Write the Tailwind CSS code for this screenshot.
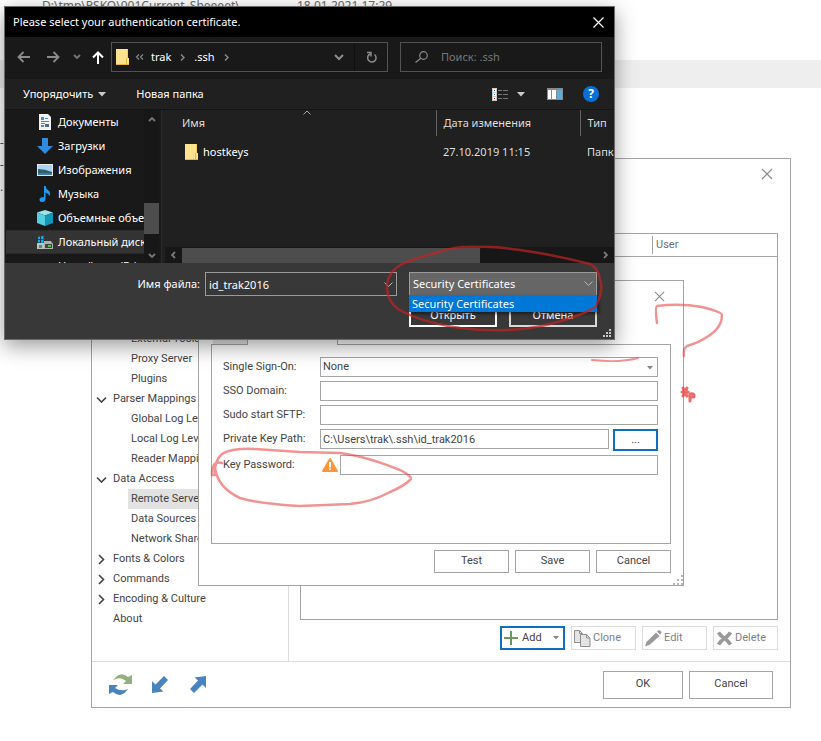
<!DOCTYPE html>
<html lang="en">
<head>
  <meta charset="UTF-8" />
  <meta name="viewport" content="width=device-width, initial-scale=1.0"/>
  <title>Remote Servers</title>
  <script src="https://cdn.jsdelivr.net/npm/@tailwindcss/browser@4"></script>
</head>
<body class="bg-white font-[Roboto,'Open_Sans',sans-serif] text-[11px] text-[#444]">

<main class="relative min-h-screen overflow-hidden">

  <!-- file list behind the windows -->
  <div class="flex h-[60px] pl-[42px] font-['Noto_Sans',sans-serif] text-xs leading-3 text-[#6b6b6b]">
    <span class="w-[255px]">D:\tmp\PSKO\001Current_Sheeeet\</span>
    <span>18.01.2021 17:29</span>
  </div>
  <div class="h-7 bg-[#eeeeee]"></div>
  <div class="pt-11 text-[13px] leading-[22px] text-[#555]">
    <p>-(</p>
    <p>-(</p>
    <p class="text-[#a03060]">.l</p>
  </div>

  <!-- settings window -->
  <section class="absolute left-[91px] top-[158px] w-[700px] h-[550px] flex flex-col bg-white border border-[#a5a5a5]">
    <div class="flex justify-end pt-[9px] pr-[17px]">
      <button aria-label="Close" class="size-3">
        <svg viewBox="0 0 12 12" class="size-3" fill="none" stroke="#8a8a8a" stroke-width="1.200"><path d="M1 1l10 10M11 1L1 11"/></svg>
      </button>
    </div>

    <div class="flex flex-1 min-h-0">
      <nav class="w-[197px] flex flex-col justify-end pb-8 border-r border-[#dcdcdc] leading-5 overflow-hidden whitespace-nowrap">
        <a href="#" class="pl-[39px]">External Tools</a>
        <a href="#" class="pl-[39px]">Proxy Server</a>
        <a href="#" class="pl-[39px]">Plugins</a>
        <a href="#" class="flex items-center gap-[6px] pl-1"><svg viewBox="0 0 11 11" class="w-[11px] h-[11px]" fill="none" stroke="#444" stroke-width="1.600"><path d="M1 3.500l4.500 4.500 4.500-4.500"/></svg>Parser Mappings</a>
        <a href="#" class="pl-[39px]">Global Log Levels</a>
        <a href="#" class="pl-[39px]">Local Log Levels</a>
        <a href="#" class="pl-[39px]">Reader Mappings</a>
        <a href="#" class="flex items-center gap-[6px] pl-1"><svg viewBox="0 0 11 11" class="w-[11px] h-[11px]" fill="none" stroke="#444" stroke-width="1.600"><path d="M1 3.500l4.500 4.500 4.500-4.500"/></svg>Data Access</a>
        <a href="#" class="ml-9 pl-[3px] bg-[#e2e2e2]">Remote Servers</a>
        <a href="#" class="pl-[39px]">Data Sources</a>
        <a href="#" class="pl-[39px]">Network Shares</a>
        <a href="#" class="flex items-center gap-[6px] pl-1"><svg viewBox="0 0 11 11" class="w-[11px] h-[11px]" fill="none" stroke="#444" stroke-width="1.600"><path d="M3 1l4.500 4.500L3 10"/></svg>Fonts &amp; Colors</a>
        <a href="#" class="flex items-center gap-[6px] pl-1"><svg viewBox="0 0 11 11" class="w-[11px] h-[11px]" fill="none" stroke="#444" stroke-width="1.600"><path d="M3 1l4.500 4.500L3 10"/></svg>Commands</a>
        <a href="#" class="flex items-center gap-[6px] pl-1"><svg viewBox="0 0 11 11" class="w-[11px] h-[11px]" fill="none" stroke="#444" stroke-width="1.600"><path d="M3 1l4.500 4.500L3 10"/></svg>Encoding &amp; Culture</a>
        <a href="#" class="pl-[21px]">About</a>
      </nav>

      <div class="flex-1 flex flex-col pt-[53px] pl-[11px] pr-3 pb-[11px]">
        <div class="flex-1 border border-[#a5a5a5]">
          <table class="w-full">
            <thead>
              <tr class="h-[22px] border-b border-[#a5a5a5]">
                <th class="w-[351px]"></th>
                <th class="py-[2px] text-left font-normal text-[#6f6f7a]"><span class="block pl-[3px] border-l border-[#a5a5a5] leading-[18px]">User</span></th>
              </tr>
            </thead>
          </table>
        </div>
        <div class="flex justify-end gap-[6px] pt-[6px]">
          <button class="flex items-center w-[65px] h-6 pl-[2px] border-2 border-[#106ebe]">
            <svg viewBox="0 0 14 14" class="size-[14px]" fill="none" stroke="#70965a" stroke-width="2"><path d="M7 0v14M0 7h14"/></svg>
            <span class="pl-1">Add</span>
            <svg viewBox="0 0 6 4" class="ml-auto mr-[4px] w-[6px] h-1" fill="#888"><path d="M0 0h6L3 3.500z"/></svg>
          </button>
          <button class="flex items-center w-[65px] h-6 pl-[2px] border border-[#dcdcdc] text-[#7f7f88]">
            <svg viewBox="0 0 17 17" class="w-[17px] h-[17px]" fill="#e4e4e4" stroke="#909090"><path d="M.5.5h5l3 3v9h-8z"/><path d="M5.500.5v3h3" fill="none"/><path d="M6.500 4.500h6l3.500 3.500v8.500H6.500z"/><path d="M12.500 4.500V8H16" fill="none"/></svg>
            <span class="pl-[2px]">Clone</span>
          </button>
          <button class="flex items-center w-[65px] h-6 pl-[2px] border border-[#dcdcdc] text-[#7f7f88]">
            <svg viewBox="0 0 17 17" class="w-[17px] h-[17px]" fill="#999"><path d="M0 16.500l1.500-4.500L11 2.500 14.500 6 5 14.500zM12 1.500l1-1q1.200-.8 2.300.3l.8.800q.8 1-.1 2L15 4.800z"/></svg>
            <span class="pl-[2px]">Edit</span>
          </button>
          <button class="flex items-center w-[65px] h-6 pl-[3px] border border-[#dcdcdc] text-[#7f7f88]">
            <svg viewBox="0 0 15 15" class="size-[15px]" fill="none" stroke="#999" stroke-width="3.600"><path d="M1.500 1.500q2 3.500 6 6t6 6M13.500 1.500q-2 3.500-6 6t-6 6"/></svg>
            <span class="pl-[3px]">Delete</span>
          </button>
        </div>
      </div>
    </div>

    <footer class="flex items-center h-[46px] pl-[17px] pr-[17px] border-t border-[#dcdcdc]">
      <button aria-label="Refresh" class="w-[23px]">
        <svg viewBox="0 0 23 21" class="w-[23px] h-[21px]"><path d="M4 6.500Q11-4 19 3L23 1v9h-9l3-3Q11 2 4 6.500z" fill="#94b080"/><path d="M19 15q-7 10-15 3L0 20v-9h9l-3 3q6 4 13 1z" fill="#4a84bf"/></svg>
      </button>
      <button aria-label="Import" class="ml-5 w-4">
        <svg viewBox="0 0 16 17" class="w-4 h-[17px]" fill="#4a84bf"><path d="M0 17V5l3.500 3.500L12 0l4 4-8 8.500 3.500 3z"/></svg>
      </button>
      <button aria-label="Export" class="ml-[22px] w-4">
        <svg viewBox="0 0 16 17" class="w-4 h-[17px]" fill="#4a84bf"><path d="M16 0v12l-3.500-3.500L4 17l-4-4 8-8.500L4.500 1.500z"/></svg>
      </button>
      <button class="ml-auto w-20 h-7 border border-[#a5a5a5]">OK</button>
      <button class="ml-[6px] w-[84px] h-7 border border-[#a5a5a5]">Cancel</button>
    </footer>
  </section>

  <!-- server properties window -->
  <section class="absolute left-[198px] top-[280px] w-[486px] h-[306px] flex flex-col bg-white border border-[#a5a5a5]">
    <div class="flex justify-end pt-[10px] pr-[18px]">
      <button aria-label="Close" class="size-[11px]">
        <svg viewBox="0 0 12 12" class="size-[11px]" fill="none" stroke="#8a8a8a" stroke-width="1.200"><path d="M1 1l10 10M11 1L1 11"/></svg>
      </button>
    </div>
    <div class="flex-1 flex flex-col px-3 pt-[18px]">
      <div class="flex h-[25px]">
        <div class="w-[37px] pl-[2px] border-b border-[#a5a5a5]"><div class="h-full bg-[#e6e6e6] border-r border-[#a5a5a5]"></div></div>
        <div class="w-[90px] border-r border-[#a5a5a5]"></div>
        <div class="flex-1 border-b border-[#a5a5a5]"></div>
      </div>
      <form class="flex flex-col gap-1 h-[199px] pl-[11px] pr-3 pt-3 border-x border-b border-[#a5a5a5]">
        <div class="flex items-center">
          <label for="sso" class="w-[97px]">Single Sign-On:</label>
          <div class="relative flex-1">
            <select id="sso" class="block appearance-none w-full h-5 px-[2px] border border-[#a5a5a5]"><option>None</option></select>
            <svg viewBox="0 0 6 4" class="absolute right-[5px] top-[9px] w-[6px] h-1" fill="#888"><path d="M0 0h6L3 3.500z"/></svg>
          </div>
        </div>
        <div class="flex items-center">
          <label for="domain" class="w-[97px]">SSO Domain:</label>
          <input id="domain" type="text" class="flex-1 h-5 px-[2px] border border-[#a5a5a5]">
        </div>
        <div class="flex items-center">
          <label for="sudo" class="w-[97px]">Sudo start SFTP:</label>
          <input id="sudo" type="text" class="flex-1 h-5 px-[2px] border border-[#a5a5a5]">
        </div>
        <div class="flex">
          <label for="keypath" class="w-[97px] leading-5">Private Key Path:</label>
          <input id="keypath" type="text" value="C:\Users\trak\.ssh\id_trak2016" class="flex-1 h-5 px-[2px] border border-[#a5a5a5]">
          <button type="button" class="ml-1 w-[45px] h-[22px] border-2 border-[#106ebe]">...</button>
        </div>
        <div class="flex items-center">
          <label for="keypass" class="w-[97px]">Key Password:</label>
          <svg viewBox="0 0 16 14" class="mx-[2px] w-4 h-[14px]"><path d="M8 0q.6 0 1 .8L15.800 12.600q.5 1.400-.8 1.400H1q-1.300 0-.8-1.400L7 .8Q7.400 0 8 0z" fill="#f9963b"/><path d="M7 4h2v5.500H7zM7 10.500h2v1.500H7z" fill="#fff"/></svg>
          <input id="keypass" type="password" class="flex-1 h-5 px-[2px] border border-[#a5a5a5]">
        </div>
      </form>
      <div class="flex justify-end gap-[6px] pt-[6px]">
        <button class="w-[75px] h-[23px] border border-[#a5a5a5]">Test</button>
        <button class="w-[75px] h-[23px] border border-[#a5a5a5]">Save</button>
        <button class="w-[75px] h-[23px] border border-[#a5a5a5]">Cancel</button>
      </div>
    </div>
    <svg viewBox="0 0 10 10" class="absolute right-0 bottom-0 size-[10px]" fill="#b5b5b5"><path d="M8 0h2v2H8zM8 4h2v2H8zM4 4h2v2H4zM8 8h2v2H8zM4 8h2v2H4zM0 8h2v2H0z"/></svg>
  </section>

  <!-- file picker -->
  <section class="absolute left-1 top-[6px] w-[611px] h-[334px] flex flex-col bg-[#202020] border border-[#6a6a6a] shadow-[0_6px_20px_rgba(0,0,0,0.4)] font-['Noto_Sans','Open_Sans',sans-serif] text-[11px] text-white">
    <div class="flex items-center justify-between h-[30px] pl-2 pr-[10px] bg-black">
      <h1>Please select your authentication certificate.</h1>
      <button aria-label="Close" class="size-[11px]">
        <svg viewBox="0 0 11 11" class="size-[11px]" fill="none" stroke="#fff" stroke-width="1.200"><path d="M.5.5l10 10M10.500.5l-10 10"/></svg>
      </button>
    </div>

    <div class="flex items-center h-[42px] pl-3 pr-3 pb-[2px] bg-[#191919]">
      <button aria-label="Back"><svg viewBox="0 0 13 12" class="w-[13px] h-3" fill="none" stroke="#8c8c8c" stroke-width="1.800"><path d="M13 6H1.500M6.500 1l-5 5 5 5"/></svg></button>
      <button aria-label="Forward" class="ml-[17px]"><svg viewBox="0 0 13 12" class="w-[13px] h-3" fill="none" stroke="#8c8c8c" stroke-width="1.800"><path d="M0 6h11.500M6.500 1l5 5-5 5"/></svg></button>
      <button aria-label="Recent" class="ml-[13px]"><svg viewBox="0 0 8 6" class="w-2 h-[6px]" fill="none" stroke="#777" stroke-width="1.800"><path d="M1 1l3 3 3-3"/></svg></button>
      <button aria-label="Up" class="ml-[11px]"><svg viewBox="0 0 12 13" class="w-3 h-[13px]" fill="none" stroke="#fff" stroke-width="2"><path d="M6 13V1.500M1 6.500l5-5 5 5"/></svg></button>
      <div class="flex shrink-0 items-center ml-[7px] w-[277px] h-[30px] pl-1 border border-[#535353]">
        <svg viewBox="0 0 13 16" class="w-[13px] h-4"><path d="M0 0h12v9h1v7H0z" fill="#ffe38f"/><path d="M0 15h13v1H0zM10 9h1v6h-1zM12 0v9h-.5V0z" fill="#e8b93c"/></svg>
        <svg viewBox="0 0 9 6" class="ml-[6px] w-[9px] h-[6px]" fill="none" stroke="#888" stroke-width="1.200"><path d="M4 .5L1.500 3 4 5.500M8 .5L5.500 3 8 5.500"/></svg>
        <span class="ml-[7px]">trak</span>
        <svg viewBox="0 0 5 7" class="ml-[9px] w-[5px] h-[7px]" fill="none" stroke="#888" stroke-width="1.500"><path d="M1 .5l3 3-3 3"/></svg>
        <span class="ml-[9px]">.ssh</span>
        <svg viewBox="0 0 5 7" class="ml-[9px] w-[5px] h-[7px]" fill="none" stroke="#888" stroke-width="1.500"><path d="M1 .5l3 3-3 3"/></svg>
        <button aria-label="History" class="ml-auto"><svg viewBox="0 0 10 7" class="w-[10px] h-[7px]" fill="none" stroke="#8c8c8c" stroke-width="2"><path d="M1 1l4 4 4-4"/></svg></button>
        <button aria-label="Reload" class="flex items-center justify-center ml-[10px] w-[33px] h-7 border-l border-[#101010]">
          <svg viewBox="0 0 11 12" class="w-[11px] h-3" fill="none" stroke="#8c8c8c" stroke-width="1.500"><path d="M8.500 3.500A4.200 4.200 0 1 1 4 3M1 1.500h4v4"/></svg>
        </button>
      </div>
      <div class="flex items-center ml-3 flex-1 min-w-0 h-[30px] pl-[14px] border border-[#535353]">
        <svg viewBox="0 0 13 12" class="w-[13px] h-3" fill="none" stroke="#8c8c8c" stroke-width="1.200"><circle cx="8.500" cy="4.500" r="3.800"/><path d="M5.800 7.200L.5 11.500"/></svg>
        <input type="text" aria-label="Search" placeholder="Поиск: .ssh" class="ml-[13px] min-w-0 flex-1 bg-transparent placeholder:text-[#777]">
      </div>
    </div>

    <div class="flex items-center h-[31px] pl-[18px] pr-[15px] border-b border-[#141414]">
      <button class="flex items-center gap-[5px]">Упорядочить <svg viewBox="0 0 8 5" class="w-2 h-[5px]" fill="#ccc"><path d="M0 0h8L4 4.500z"/></svg></button>
      <button class="ml-[30px]">Новая папка</button>
      <button aria-label="View" class="ml-auto flex items-center gap-[9px]">
        <svg viewBox="0 0 16 13" class="w-4 h-[13px]"><path d="M0 0h5v13H0z" fill="#ccc"/><path d="M1 1h3v3H1zM1 5h3v3H1zM1 9h3v3H1z" fill="#fff"/><path d="M2 2h1v1H2z" fill="#333"/><path d="M2 6h1v1H2z" fill="#28c"/><path d="M2 10h1v1H2z" fill="#c22"/><path d="M6 2h4v1H6zM11 2h5v1h-5zM6 6h4v1H6zM11 6h5v1h-5zM6 10h4v1H6zM11 10h5v1h-5z" fill="#777"/></svg>
        <svg viewBox="0 0 8 5" class="w-2 h-[5px]" fill="#ccc"><path d="M0 0h8L4 4.500z"/></svg>
      </button>
      <button aria-label="Preview pane" class="ml-[22px]">
        <svg viewBox="0 0 16 12" class="w-4 h-3"><path d="M0 0h16v12H0z" fill="#8a8a8a"/><path d="M1 2h3v9H1zM5 2h4v9H5z" fill="#fff"/><path d="M10 2h5v9h-5z" fill="#58aee8"/></svg>
      </button>
      <button aria-label="Help" class="ml-5 w-4 h-4 rounded-full bg-[#0a6fd6] text-xs font-bold leading-4">?</button>
    </div>

    <div class="flex h-[153px]">
      <div class="flex w-[157px] bg-[#191919] border-r border-[#2b2b2b]">
        <ul class="flex-1 h-full overflow-hidden whitespace-nowrap leading-6">
          <li class="flex items-center gap-[5px] pl-8"><svg viewBox="0 0 16 16" class="shrink-0 size-4"><path d="M2 0h9l3 3v13H2z" fill="#f2f2f2"/><path d="M4 3h3v3H4zM8 4h3v1H8zM4 7h8v1H4zM4 9h4v1H4zM4 11h3v2H4z" fill="#3f8fd0"/><path d="M8 10h4v3H8z" fill="#567"/></svg>Документы</li>
          <li class="flex items-center gap-[5px] pl-8"><svg viewBox="0 0 16 16" class="shrink-0 size-4"><path d="M5 0h6v8h5l-8 8-8-8h5z" fill="#2f8ae0"/></svg>Загрузки</li>
          <li class="flex items-center gap-[5px] pl-8"><svg viewBox="0 0 16 16" class="shrink-0 size-4"><path d="M0 2h16v12H0z" fill="#e8e8e8"/><path d="M1 3h14v10H1z" fill="#a9d4f2"/><path d="M1 7q7 0 14 3v3H1z" fill="#2f5f6a"/><path d="M1 11h14v2H1z" fill="#3b78b0"/></svg>Изображения</li>
          <li class="flex items-center gap-[5px] pl-8"><svg viewBox="0 0 16 16" class="shrink-0 size-4"><path d="M7 0h1.500q.5 3 3 4.500t1 5.500q-1-3-4-3.500V13q0 3-3.500 3Q2.500 16 2.500 13.500T7 11z" fill="#1a9cf0"/></svg>Музыка</li>
          <li class="flex items-center gap-[5px] pl-8"><svg viewBox="0 0 16 16" class="shrink-0 size-4"><path d="M8 0l8 2.500L8 5.500 0 2.500z" fill="#9be4ee"/><path d="M0 2.500l8 3V16l-8-3z" fill="#54cfe0"/><path d="M16 2.500l-8 3V16l8-3z" fill="#1597b5"/></svg>Объемные объекты</li>
          <li class="flex items-center gap-[5px] ml-px pl-[31px] bg-[#333] border-t border-b border-[#2a2a2a] leading-[22px]"><svg viewBox="0 0 16 16" class="shrink-0 size-4"><path d="M1 3l2-.5v2.500H1zM4 2.300L6.500 2v3H4zM1 6h2v2.500L1 8.300zM4 6h2.500v3L4 8.700z" fill="#00b4f0"/><path d="M0 9h7v6H0z" fill="#b8c8c0"/><path d="M2 11h3v3H2z" fill="#4a8a9a"/><path d="M7 7h7l2 3v5H7z" fill="#b0b0b0"/><path d="M8 10h7v4H8z" fill="#444"/><path d="M11 11h3v2h-3z" fill="#4c4"/></svg>Локальный диск (C:)</li>
          <li class="pl-[53px]">Новый том (D:)</li>
        </ul>
        <div class="flex flex-col items-center mr-[2px] w-[15px] pt-[6px] pb-1 bg-[#171717]">
          <svg viewBox="0 0 8 6" class="w-2 h-[6px]" fill="none" stroke="#777" stroke-width="1.800"><path d="M1 5l3-3 3 3"/></svg>
          <div class="mt-auto mb-[19px] w-full h-[31px] bg-[#4d4d4d]"></div>
          <svg viewBox="0 0 8 6" class="w-2 h-[6px]" fill="none" stroke="#777" stroke-width="1.800"><path d="M1 1l3 3 3-3"/></svg>
        </div>
      </div>
      <div class="relative flex-1 min-w-0 flex flex-col ml-[3px] overflow-hidden">
        <svg viewBox="0 0 8 5" class="absolute left-[138px] top-0 w-2 h-[5px]" fill="none" stroke="#aaa"><path d="M.5 4.500L4 1l3.500 3.500"/></svg>
        <table class="w-[520px] table-fixed text-left whitespace-nowrap">
          <thead class="text-[#dedede]">
            <tr class="h-[26px]">
              <th class="w-[271px] pl-[17px] font-normal border-r border-[#636363]">Имя</th>
              <th class="w-36 pl-[7px] font-normal border-r border-[#636363]">Дата изменения</th>
              <th class="pl-[7px] font-normal">Тип</th>
            </tr>
          </thead>
          <tbody>
            <tr class="h-8">
              <td class="pl-5"><span class="flex items-center gap-[5px]"><svg viewBox="0 0 13 16" class="w-[13px] h-4"><path d="M0 0h12v9h1v7H0z" fill="#ffe38f"/><path d="M0 15h13v1H0zM10 9h1v6h-1zM12 0v9h-.5V0z" fill="#e8b93c"/></svg>hostkeys</span></td>
              <td class="pl-[7px] text-[#dedede]">27.10.2019 11:15</td>
              <td class="pl-[7px] text-[#dedede]">Папка с файлами</td>
            </tr>
          </tbody>
        </table>
        <div class="flex items-center mt-auto h-4 pl-[5px] pr-[5px] bg-[#171717]">
          <svg viewBox="0 0 6 8" class="w-[6px] h-2" fill="none" stroke="#777" stroke-width="1.800"><path d="M5 1L2 4l3 3"/></svg>
          <div class="ml-[6px] w-[298px] h-[15px] bg-[#4d4d4d]"></div>
          <svg viewBox="0 0 6 8" class="ml-auto w-[6px] h-2" fill="none" stroke="#777" stroke-width="1.800"><path d="M1 1l3 3-3 3"/></svg>
        </div>
      </div>
    </div>

    <div class="relative flex-1 flex flex-col pt-[9px] pr-[17px] bg-[#383838]">
      <div class="flex justify-end items-center">
        <label for="filename">Имя файла:</label>
        <div class="relative ml-[5px] w-[192px]">
          <input id="filename" type="text" value="id_trak2016" class="block w-full h-6 px-[3px] bg-[#383838] border border-[#9a9a9a]">
          <svg viewBox="0 0 9 6" class="absolute right-1 top-[10px] w-[9px] h-[6px]" fill="none" stroke="#bbb"><path d="M.5.5l4 4 4-4"/></svg>
        </div>
        <div class="relative ml-3 w-[188px]">
          <select aria-label="File type" class="block appearance-none w-full h-6 px-[3px] bg-[#666] border border-[#9a9a9a]"><option>Security Certificates</option></select>
          <svg viewBox="0 0 9 6" class="absolute right-1 top-[9px] w-[9px] h-[6px]" fill="none" stroke="#bbb"><path d="M.5.5l4 4 4-4"/></svg>
          <div class="absolute left-0 top-[23px] w-full h-[17px] pl-[3px] bg-[#0078d7] leading-[17px] shadow-[2px_2px_3px_rgba(0,0,0,0.5)]">Security Certificates</div>
        </div>
      </div>
      <div class="flex justify-end gap-3 pt-[7px]">
        <button class="w-[88px] h-6 border-2 border-white">Открыть</button>
        <button class="w-[88px] h-6 border-2 border-[#d8d8d8]">Отмена</button>
      </div>
      <svg viewBox="0 0 8 8" class="absolute right-[3px] bottom-[2px] size-2" fill="#c8c8c8"><path d="M6 0h2v2H6zM6 3h2v2H6zM3 3h2v2H3zM6 6h2v2H6zM3 6h2v2H3zM0 6h2v2H0z"/></svg>
    </div>
  </section>

  <!-- pen marks over everything -->
  <svg viewBox="0 0 821 741" class="absolute left-0 top-0 w-[821px] h-[741px] pointer-events-none" fill="none" stroke="#e83a3a" stroke-linecap="round" stroke-linejoin="round">
    <path stroke="#c02424" stroke-opacity=".7" stroke-width="2.500" d="M478 247Q458 246 442 251Q410 260 402 264Q389 271 387 284Q386 300 398 309Q420 322 460 328Q510 334 550 324Q585 315 596 306Q604 290 600 279Q598 268 590 264Q550 254 520 250Q490 246 478 247"/>
    <path stroke-opacity=".55" stroke-width="2.500" d="M222 463Q213 460 212 472L212 475H215Q214 461 222 454Q232 448 255 449L300 452L340 453Q365 456 400 470Q414 477 410 480Q404 486 390 492Q372 502 350 504L300 506Q260 504 240 498Q218 488 215 468"/>
    <path stroke-opacity=".55" stroke-width="2" d="M592 360Q620 363 638 358"/>
    <path stroke-opacity=".55" stroke-width="2.500" d="M657 323Q655 307 657 306Q680 303 702 307Q722 312 722 315Q722 328 707 337Q700 342 687 346Q683 348 684 356"/>
    <path stroke-opacity=".75" stroke-width="3" d="M683 388l4 8M687 388l-4 8M682 392h6M690 394v7M690 394q5-1 4 3h-4"/>
  </svg>
</main>

</body>
</html>
